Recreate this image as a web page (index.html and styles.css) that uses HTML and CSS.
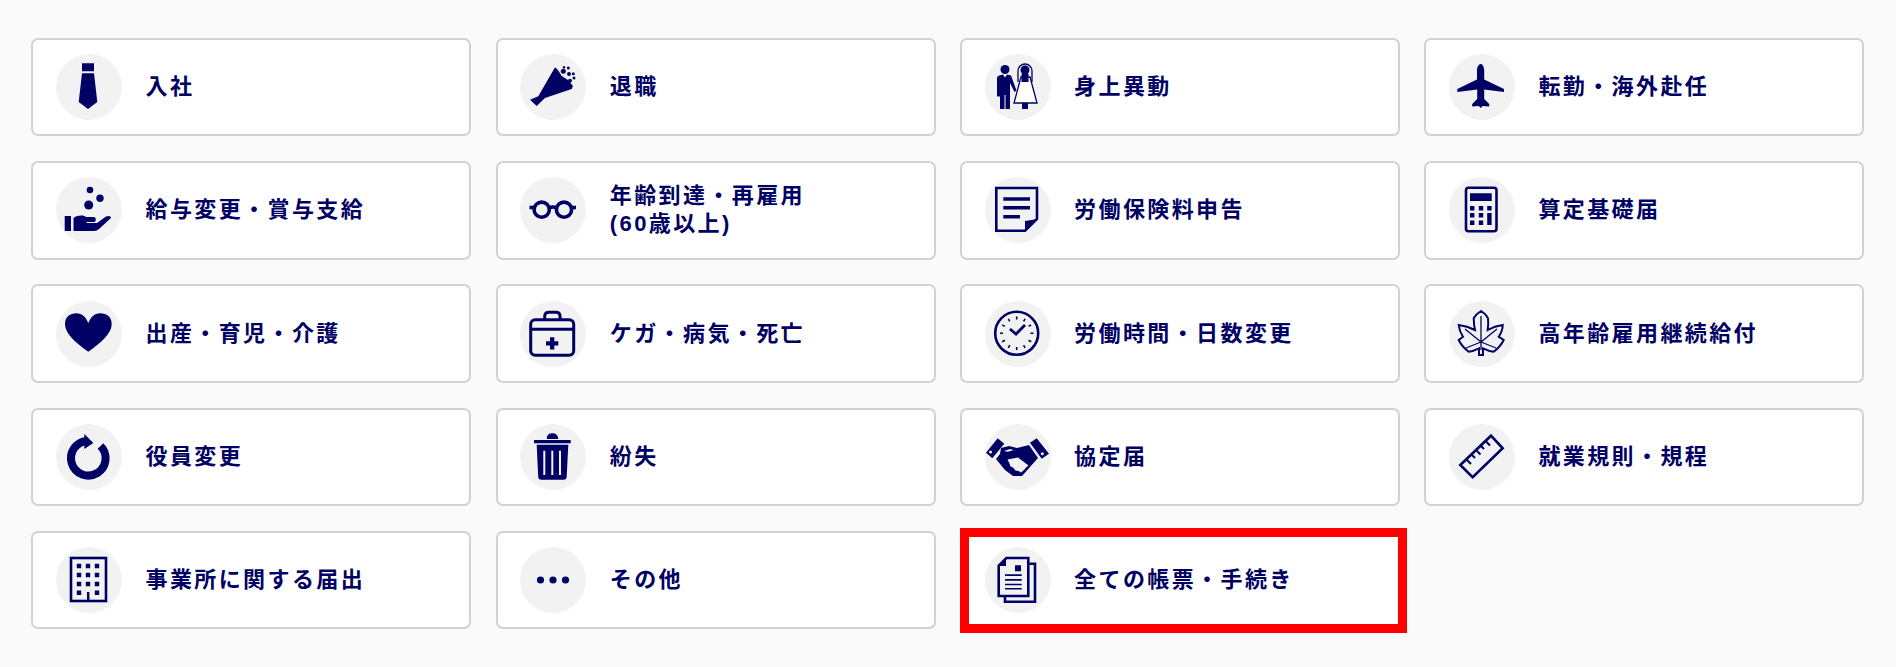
FILE: index.html
```html
<!DOCTYPE html>
<html lang="ja">
<head>
<meta charset="utf-8">
<title>手続き一覧</title>
<link rel="stylesheet" href="styles.css">
</head>
<body>
<main class="grid">
<a class="card"><span class="badge"><svg viewBox="0 0 66 66"><path d="M26 9.300h12v8H26zM26 19.300h12l3.300 28.700L32 55l-9.300-7z"/></svg></span><span class="label">入社</span></a>
<a class="card"><span class="badge"><svg viewBox="0 0 66 66"><path d="M35 13.300l3 2.700 3.700 6 6.300 4 5 6-1.300 3L25 44l-8.300 8-6.700-6.300 8.300-3.400z"/><circle cx="43.300" cy="17.300" r="2.500"/><circle cx="48.300" cy="14" r="1.500"/><circle cx="49" cy="20" r="2"/><circle cx="53.300" cy="19.700" r="1.500"/><circle cx="50" cy="26.700" r="2"/><circle cx="54" cy="24" r="1.500"/><circle cx="44" cy="13.300" r="1.200"/></svg></span><span class="label">退職</span></a>
<a class="card"><span class="badge"><svg viewBox="0 0 66 66"><circle cx="20" cy="15.500" r="4.500"/><path d="M12 24q0-2 2-2.500l4-1 2 3 2-3 4 1 5.500 15-2 1.500-4.500-9V55h-4.500V41h-1V55H15V42.500h-3z"/><path class="line-veil" d="M33 28V17a7 7 0 0 1 14 0v11"/><path class="line-dress" d="M36 23h9l7 26H29z"/><circle cx="40" cy="16" r="4.500"/><path d="M36.500 20h7v8h-7zM37 49h6v6h-6z"/></svg></span><span class="label">身上異動</span></a>
<a class="card"><span class="badge"><svg viewBox="0 0 66 66"><path d="M31.700 10c2 0 3.500 3 3.500 7v8.500L55 35v3l-19.800-2.500V45l5 5v2.500l-6.500-.5-2 2-2-2-6.500.5V50l5-5v-9.500L8.300 38v-3l19.700-9.500V17c0-4 1.700-7 3.700-7z"/></svg></span><span class="label">転勤・海外赴任</span></a>

<a class="card"><span class="badge"><svg viewBox="0 0 66 66"><circle cx="34" cy="13" r="3.300"/><circle cx="44" cy="21.300" r="3.700"/><circle cx="32.700" cy="28" r="4.500"/><path d="M8.700 39H15v15H8.700zM17.500 41c4.500-3 9.500-3 12.500-1h8q3 1 1 5h-9l1 1h10l9-6.500q5-1.500 5 1.500L43 52q-2 2-5 2H17.500z"/></svg></span><span class="label">給与変更・賞与支給</span></a>
<a class="card"><span class="badge"><svg viewBox="0 0 66 66"><g class="line-glass"><circle cx="21.700" cy="32.700" r="7.600"/><circle cx="44" cy="32.700" r="7.600"/><path d="M29 31q4-2 7.700 0M14 30.500H9.500M51.500 30.500H56"/></g></svg></span><span class="label">年齢到達・再雇用<br>(60歳以上)</span></a>
<a class="card"><span class="badge"><svg viewBox="0 0 66 66"><path class="line-thick" d="M11.300 11H52v31L40 53.700H11.300z"/><path d="M18.300 20.300H45v3.400H18.300zM18.300 29H45v3.400H18.300zM18.300 38H35v3.400H18.300zM40 55l13-13-13 2z"/></svg></span><span class="label">労働保険料申告</span></a>
<a class="card"><span class="badge"><svg viewBox="0 0 66 66"><rect class="line-thick" x="17" y="10.700" width="30.500" height="43.500" rx="2.500"/><path d="M21 16.300h21.700V24H21zM21 29h4.400v4.400H21zM29.800 29h4.400v4.400h-4.400zM38.200 29h4.400v4.400h-4.400zM21 36h4.400v4.400H21zM29.800 36h4.400v4.400h-4.400zM38.200 36h4.400v12h-4.400zM21 43.600h4.400V48H21zM29.800 43.600h4.400V48h-4.400z"/></svg></span><span class="label">算定基礎届</span></a>

<a class="card"><span class="badge"><svg viewBox="0 0 66 66"><path d="M32.300 50.700C20 42 9 33 9 23 9 16 14 12.300 20.500 12.300c5.500 0 9.500 3.700 11.800 10 2.300-6.300 6.300-10 11.700-10 7 0 11.700 3.700 11.700 10.700 0 10-11.100 19-23.400 27.700z"/></svg></span><span class="label">出産・育児・介護</span></a>
<a class="card"><span class="badge"><svg viewBox="0 0 66 66"><g class="line-case"><rect x="10.700" y="18.700" width="43" height="35.500" rx="4.500"/><path d="M24.700 18.700v-3.200q0-4.200 4.200-4.200h7q4.200 0 4.200 4.200v3.200M10.700 28.300h43"/></g><path d="M30 36.300h4.300v4h4v4.300h-4v4H30v-4h-4v-4.300h4z"/></svg></span><span class="label">ケガ・病気・死亡</span></a>
<a class="card"><span class="badge"><svg viewBox="0 0 66 66"><circle class="line-thick" cx="31.700" cy="32.300" r="21.500"/><g class="line-tick"><path d="M31.700 15.500v3M31.700 46v3M15 32.300h3M45.500 32.300h3M23.300 17.800l1.500 2.600M38.600 44.200l1.500 2.600M17.200 23.900l2.600 1.500M43.600 39.200l2.600 1.500M40.100 17.800l-1.500 2.600M24.800 44.200l-1.500 2.600M46.200 23.900l-2.600 1.500M19.800 39.200l-2.600 1.500"/></g><path class="line-hand" d="M25 28l6 5 9-9"/></svg></span><span class="label">労働時間・日数変更</span></a>
<a class="card"><span class="badge"><svg viewBox="0 0 66 66"><path class="line-mid" d="M32 10q-5 3-7.300 7.300 0 6 1.300 11.700-8-4-16.300-5 .5 6 4.300 11.700l-4.300 3.300q3.500 7 10 11.700 5-.7 10.300-3.400V54h4v-6.700q5.500 2.700 10.700 3.400 6.500-4.700 10-11.700l-5-3.300q4-5.700 4-11.700-8 1-15 5 1-6 .3-11.700Q37 13 32 10z"/><path class="line-vein" d="M32 15v34M32 41l16-13M32 41L16 28M32 41l15 6M32 41l-15 6"/></svg></span><span class="label">高年齢雇用継続給付</span></a>

<a class="card"><span class="badge"><svg viewBox="0 0 66 66"><path class="line-ring" d="M31 17a17.300 17.300 0 1 0 13.500 5"/><path d="M28.300 10l9 9-9 6z"/></svg></span><span class="label">役員変更</span></a>
<a class="card"><span class="badge"><svg viewBox="0 0 66 66"><path d="M26.700 15q0-5.700 5.600-5.700t6 5.700zM14 16h36.700v3.300H14zM16.700 20.700h31.600l-1.600 32q-.2 3-3 3H21.300q-3 0-3.100-3z"/><path class="line-slit" d="M24.300 26.700V51M32.300 26.700V51M40 26.700V51"/></svg></span><span class="label">紛失</span></a>
<a class="card"><span class="badge"><svg viewBox="0 0 66 66"><path d="M1 28.800 12.700 14.200l6.600 5.600L7.300 34.200zM45 18.800l6.700-4.600L64 29.800l-7.300 5z"/><circle class="dot-white" cx="5.500" cy="28" r="1.500"/><circle class="dot-white" cx="57.300" cy="29.800" r="1.500"/><path d="M16 24l8-2 8 2 12-3 9 13-16 18h-9l-8-6-9-11 4-5z"/><path class="dot-white" d="M22.500 35.500 33 33.500l10.500 8-2.500 2-2 2.500-3 2.500-2.500-1.500-3-.5-2.500-3-2.500-1-1-3zM19 27l6-2 5 1.500-6 1.500z"/><path class="line-mid" d="M18 33q5-6 16-6.500"/></svg></span><span class="label">協定届</span></a>
<a class="card"><span class="badge"><svg viewBox="0 0 66 66"><path class="line-thick" d="M42 11.700 53.700 24.300 23.700 53.300 11.300 41z"/><path class="line-mid" d="M18 36l4 4M23 31l3 3M27.500 26.500l4 4M32 22l3 3M37 17.500l4 4"/></svg></span><span class="label">就業規則・規程</span></a>

<a class="card"><span class="badge"><svg viewBox="0 0 66 66"><rect class="line-thick" x="15" y="11" width="35" height="43"/><path d="M20.800 16.800h4.400v4.400h-4.400zM29.800 16.800h4.400v4.400h-4.400zM38.800 16.800h4.400v4.400h-4.400zM20.800 25.800h4.400v4.400h-4.400zM29.800 25.800h4.400v4.400h-4.400zM38.800 25.800h4.400v4.400h-4.400zM20.800 34.800h4.400v4.400h-4.400zM29.800 34.800h4.400v4.400h-4.400zM38.800 34.800h4.400v4.400h-4.400zM20.800 43.500h4.400v4.400h-4.400zM38.800 43.500h4.400v4.400h-4.400zM31 45h2.400v9H31z"/></svg></span><span class="label">事業所に関する届出</span></a>
<a class="card"><span class="badge"><svg viewBox="0 0 66 66"><circle cx="20.500" cy="33" r="3.600"/><circle cx="33" cy="33" r="3.600"/><circle cx="45.500" cy="33" r="3.600"/></svg></span><span class="label">その他</span></a>
<a class="card card-marked"><span class="badge"><svg viewBox="0 0 66 66"><path class="line-thick" d="M13.700 18.700 21.400 11H43.300v38H13.700z"/><path d="M30 18.300h6v6h-6zM13 19l8-8v8zM20 27.300h16.700v1.600H20zM20 32.100h16.700v1.600H20zM20 36.700h16.700v1.600H20zM20 41h16.700v1.600H20z"/><path class="line-thick" d="M44.300 16.700H50v38H20V50"/></svg></span><span class="label">全ての帳票・手続き</span><span class="marker"></span></a>
</main>
</body>
</html>
```
FILE: styles.css
```css
* { box-sizing: border-box; }
html, body { margin: 0; padding: 0; }
body {
  height: 667px;
  overflow: hidden;
  background: #fafafa;
  font-family: "Liberation Sans", "Noto Sans CJK JP", sans-serif;
}
.grid {
  display: grid;
  grid-template-columns: repeat(4, 440px);
  grid-auto-rows: 98.4px;
  column-gap: 24.3px;
  row-gap: 24.8px;
  padding: 38px 0 0 31.4px;
}
.card {
  position: relative;
  display: flex;
  align-items: center;
  gap: 23.5px;
  padding-left: 22.6px;
  background: #fff;
  border: 2px solid #d2d2d2;
  border-radius: 7px;
}
.badge {
  flex: none;
  width: 66px;
  height: 66px;
  border-radius: 50%;
  background: #f2f2f2;
}
.badge svg {
  display: block;
  width: 66px;
  height: 66px;
  fill: #000064;
}
.label {
  color: #000064;
  font-size: 22px;
  font-weight: 700;
  line-height: 28px;
  letter-spacing: 2.4px;
}
.marker {
  position: absolute;
  left: -2px;
  top: -4.8px;
  width: 447px;
  height: 105px;
  border: 9px solid #f00;
}
.line-mid, .line-veil, .line-thick, .line-glass, .line-case, .line-ring, .line-tick, .line-hand, .line-vein, .line-dress, .line-slit {
  fill: none;
  stroke: #000064;
}
.line-mid { stroke-width: 2; }
.line-veil { stroke-width: 1.300; }
.line-thick { stroke-width: 2.6; }
.line-glass { stroke-width: 3.6; }
.line-case { stroke-width: 3; }
.line-ring { stroke-width: 8; }
.line-tick { stroke-width: 1.6; }
.line-hand { stroke-width: 2.8; }
.line-vein { stroke-width: 1.300; }
.line-dress { fill: #fff; stroke-width: 1.300; }
.line-slit { stroke: #f2f2f2; stroke-width: 2; }
.dot-white { fill: #f2f2f2; }
```
